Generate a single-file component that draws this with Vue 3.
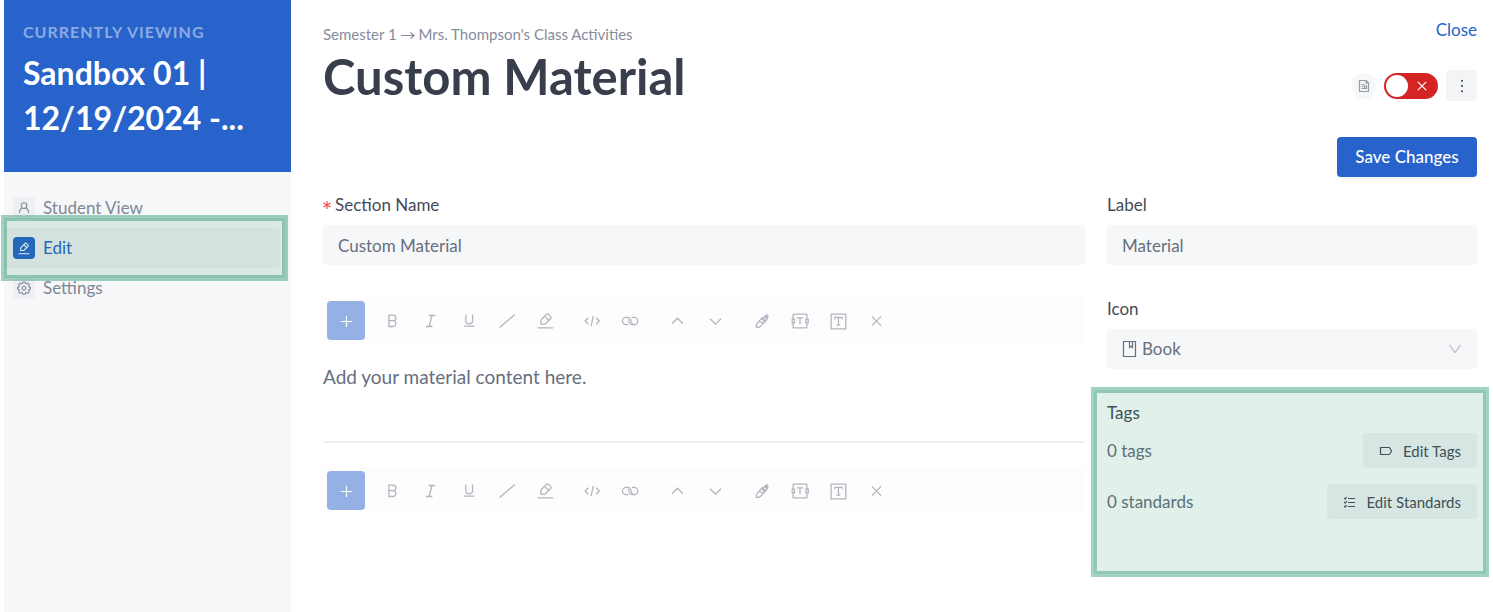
<script setup>
import { ref } from 'vue'

const sectionName = ref('Custom Material')
const label = ref('Material')
const icon = ref('Book')
const published = ref(false)

const navItems = [
  { name: 'Student View', icon: 'user', active: false },
  { name: 'Edit', icon: 'edit', active: true },
  { name: 'Settings', icon: 'gear', active: false },
]

const toolGroups = [
  [
    { name: 'Bold', paths: ['M7.500 5.500h4.500a3 3 0 0 1 0 6.200H7.500zM7.500 11.700h5.300a3.300 3.300 0 0 1 0 6.300H7.500z'] },
    { name: 'Italic', paths: ['M9.500 6h7M6.500 18h7M13 6l-3 12'] },
    { name: 'Underline', paths: ['M8.500 5v6.500a3.700 3.700 0 0 0 7.400 0V5M6.500 17.500h11.500'] },
    { name: 'Text color', paths: ['M4 19L20.500 5'] },
    { name: 'Highlight', paths: ['M7.500 15.500v-4.500l6.300-6.300q1-1 2 0l2.500 2.500q1 1 0 2l-6.300 6.300zM11.700 7l4.500 4.500M4 19.500h17'] },
  ],
  [
    { name: 'Code', paths: ['M8 8.500L4.500 12 8 15.500M16.500 8.500l3.500 3.500-3.500 3.500M13.500 6.500l-2.500 11'] },
    { name: 'Link', paths: ['M10 16H7.800a4 4 0 0 1 0-8h1.400a4 4 0 0 1 4 4q0 2.500 2 3.300M14 8h2.500a4 4 0 0 1 0 8h-1.700a4 4 0 0 1-4-4q0-1.500-.8-2'] },
  ],
  [
    { name: 'Move up', paths: ['M6.500 15l6-6 6 6'] },
    { name: 'Move down', paths: ['M6.500 9.500l6 6 6-6'] },
  ],
  [
    { name: 'Paint', paths: ['M11.500 9.200l3.600 3.600-4.600 5q-1.600 1.600-4.500 1.200-.6-2.600 1-4.600zM8.500 12.500l4.500 1.500M12.500 8.500l3.500 3.500 1.500-2.200-2.500-2.500zM15 5.500l3.500 3.500M18 4.500l-1.500 2.200M19.500 7h-2'] },
    { name: 'Text field', paths: ['M4.500 10V5q0-.5.5-.5h14q.5 0 .5.500v5M4.500 14v5q0 .5.5.5h14q.5 0 .5-.5v-5M3.500 10h2.500v4H3.500zM18.500 10H21v4h-2.500zM8.500 8.500h7M12 8.500v7'] },
    { name: 'Text box', paths: ['M4.500 4.500h16v16h-16zM8.500 10V8h8v2M12.500 8v8.500M10.500 16.500h4'] },
    { name: 'Clear', paths: ['M7.500 7l10 10M17.500 7l-10 10'] },
  ],
]
</script>

<template>
  <div class="page">
    <aside class="sidebar">
      <header class="course">
        <p class="eyebrow">CURRENTLY VIEWING</p>
        <h2>Sandbox 01 |<br />12/19/2024 -...</h2>
      </header>
      <nav>
        <a v-for="item in navItems" :key="item.name" href="#" class="nav-item" :class="{ active: item.active }">
          <span class="nav-icon">
            <svg v-if="item.icon === 'user'" viewBox="0 0 16 16"><circle cx="8" cy="5.300" r="3.200" /><path d="M3 14v-1.200a4.300 4.300 0 0 1 3.200-4.500M13 14v-1.200a4.300 4.300 0 0 0-3.200-4.500" /></svg>
            <svg v-else-if="item.icon === 'edit'" viewBox="0 0 16 16"><path d="M4.200 10.800V7.900l4.900-5.100q.8-.8 1.600 0l1.800 1.800q.8.8 0 1.600l-4.700 4.600zM7.800 4.200l3.300 3.400M2 14.500h12" /></svg>
            <svg v-else viewBox="0 0 16 16"><path d="M6.700 1.200h2.600l.4 1.600 1.200.5 1.500-.9 1.800 1.800-.9 1.500.5 1.200 1.500.4v1.900l-1.500.4-.5 1.200.9 1.500-1.800 1.800-1.500-.9-1.200.5-.4 1.500H6.700l-.4-1.500-1.200-.5-1.500.9-1.800-1.800.9-1.500-.5-1.200-1.500-.4V7.300l1.500-.4.5-1.200-.9-1.500 1.800-1.800 1.500.9 1.200-.5z" /><circle cx="8" cy="8.200" r="2.200" /></svg>
          </span>
          {{ item.name }}
        </a>
        <div class="highlight nav-highlight"></div>
      </nav>
    </aside>

    <main>
      <header class="top">
        <div>
          <p class="crumbs">Semester 1 <svg viewBox="0 0 14 10"><path d="M0 5.500h13M9.500 2.500l3.500 3-3.500 3" /></svg> Mrs. Thompson's Class Activities</p>
          <h1>Custom Material</h1>
        </div>
        <div class="actions">
          <a href="#" class="close">Close</a>
          <div class="controls">
            <button class="doc" type="button" aria-label="Document">
              <svg viewBox="0 0 12 12"><path d="M1.500 .5h6.500l2.500 2.500v8.500h-9zM8 .5V3h2.500M3.500 4.500h3M3.500 6.500h2M3.500 8.500h5M6.500 6h2v2.500h-2z" /></svg>
            </button>
            <label class="switch">
              <input v-model="published" type="checkbox" role="switch" aria-label="Published" />
              <svg viewBox="0 0 10 10"><path d="M.8.8l8.400 8.400M9.200.8L.8 9.200" /></svg>
            </label>
            <button class="more" type="button" aria-label="More">
              <svg viewBox="0 0 16 16"><circle cx="8" cy="2.700" r="1" /><circle cx="8" cy="8" r="1" /><circle cx="8" cy="13.300" r="1" /></svg>
            </button>
          </div>
          <button class="save" type="button">Save Changes</button>
        </div>
      </header>

      <div class="columns">
        <section class="editor">
          <div class="field">
            <label for="section"><svg class="required" viewBox="0 0 8 8"><path d="M4 0v8M.500 2l7 4M7.500 2l-7 4" /></svg>Section Name</label>
            <input id="section" v-model="sectionName" type="text" />
          </div>
          <template v-for="n in 2" :key="n">
            <div class="toolbar" role="toolbar">
              <button class="add" type="button" aria-label="Add"><svg viewBox="0 0 24 24"><path d="M12.500 7v11M7 12.500h11" /></svg></button>
              <div v-for="(group, g) in toolGroups" :key="g" class="group">
                <button v-for="tool in group" :key="tool.name" type="button" :aria-label="tool.name">
                  <svg viewBox="0 0 24 24"><path v-for="d in tool.paths" :key="d" :d="d" /></svg>
                </button>
              </div>
            </div>
            <div v-if="n === 1" class="content"><p>Add your material content here.</p></div>
          </template>
        </section>

        <section class="details">
          <div class="field">
            <label for="label">Label</label>
            <input id="label" v-model="label" type="text" />
          </div>
          <div class="field">
            <label for="icon">Icon</label>
            <div class="select">
              <svg class="book" viewBox="0 0 16 18"><path d="M1.500 1.500h12v15h-12zM7.500 1.500v6l1.500-1.300 1.500 1.300v-6" /></svg>
              <select id="icon" v-model="icon"><option>Book</option></select>
              <svg class="chevron" viewBox="0 0 14 10"><path d="M1.500 1L7 8.500 12.500 1" /></svg>
            </div>
          </div>
          <div class="tags">
            <h3>Tags</h3>
            <div class="tag-row">
              <span>0 tags</span>
              <button type="button"><svg viewBox="0 0 14 14"><path d="M1.500 3.500h8.300q.6 0 1 .5l1.700 3-1.700 3q-.4.500-1 .5H1.500z" /></svg>Edit Tags</button>
            </div>
            <div class="tag-row">
              <span>0 standards</span>
              <button type="button"><svg viewBox="0 0 14 14"><path d="M5 3.500h7M5 7.500h7M5 11.500h7M1.200 3l1 1 1.600-2M1.200 7l1 1 1.600-2M1.200 11l1 1 1.600-2" /></svg>Edit Standards</button>
            </div>
            <div class="highlight tags-highlight"></div>
          </div>
        </section>
      </div>
    </main>
  </div>
</template>

<style>
body {
  margin: 0;
  background: #fff;
}
</style>

<style scoped>
* {
  box-sizing: border-box;
}
.page {
  display: flex;
  min-height: 100vh;
  padding-left: 4px;
  font-family: Lato, "Open Sans", sans-serif;
  font-size: 17px;
  line-height: 24px;
  color: #666e80;
}
h1, h2, h3, p {
  margin: 0;
}
button, input, select {
  font: inherit;
  color: inherit;
  border: 0;
  margin: 0;
}
button {
  display: flex;
  align-items: center;
  justify-content: center;
  padding: 0;
  border-radius: 4px;
  background: none;
}
a {
  text-decoration: none;
}
svg {
  flex: none;
  fill: none;
  stroke: currentColor;
  stroke-width: 1.2;
}
.sidebar {
  flex: none;
  width: 287px;
  background: #f6f7f9;
}
.course {
  height: 172px;
  padding: 20px 19px;
  background: #2763ca;
  color: #fff;
}
.eyebrow {
  font-size: 16px;
  font-weight: 700;
  letter-spacing: 1px;
  color: #8cabe3;
}
h2 {
  padding-top: 6px;
  font-size: 32px;
  font-weight: 700;
  line-height: 45px;
}
nav {
  position: relative;
  padding: 16px 11px 0 0;
}
.nav-item {
  display: flex;
  align-items: center;
  gap: 8px;
  height: 40px;
  padding-left: 9px;
  border-radius: 0 4px 4px 0;
  color: #7f8797;
}
.nav-icon {
  display: flex;
  align-items: center;
  justify-content: center;
  width: 22px;
  height: 22px;
  border-radius: 4px;
  background: #eeeff2;
}
.nav-icon svg {
  width: 14px;
  height: 14px;
}
.nav-item.active {
  background: #eeeff2;
  color: #2763ca;
}
.active .nav-icon {
  background: #2763ca;
  color: #fff;
}
.highlight {
  position: absolute;
  pointer-events: none;
  border: 3px solid rgba(16, 138, 100, 0.385);
  outline: 3px solid rgba(16, 138, 100, 0.385);
  outline-offset: -6px;
  background: rgba(15, 130, 80, 0.12);
  background-clip: padding-box;
}
.nav-highlight {
  top: 43px;
  left: -3px;
  right: 3px;
  height: 66px;
}
main {
  flex: 1;
  min-width: 0;
  padding: 16px 16px 0 32px;
}
.top {
  display: flex;
  justify-content: space-between;
}
.crumbs {
  padding-top: 6px;
  font-size: 15px;
  color: #858c9b;
}
.crumbs svg {
  width: 14px;
  height: 10px;
}
h1 {
  font-size: 49px;
  font-weight: 700;
  line-height: 60px;
  color: #383e4b;
}
.actions {
  display: flex;
  flex-direction: column;
  align-items: flex-end;
}
.close {
  padding-top: 2px;
  color: #2763ca;
}
.controls {
  display: flex;
  align-items: center;
  gap: 8px;
  padding: 28px 0 36px;
}
.doc {
  width: 24px;
  height: 26px;
  border-radius: 13px;
  background: #f6f7f9;
  color: #949aa6;
}
.doc svg {
  width: 12px;
  height: 12px;
}
.switch {
  display: grid;
  align-items: center;
}
.switch input {
  grid-area: 1 / 1;
  appearance: none;
  width: 54px;
  height: 26px;
  padding: 2px;
  border-radius: 13px;
  background: #d52424;
}
.switch input::before {
  content: "";
  display: block;
  width: 22px;
  height: 22px;
  border-radius: 50%;
  background: #fff;
}
.switch svg {
  grid-area: 1 / 1;
  justify-self: end;
  width: 10px;
  height: 10px;
  margin-right: 11px;
  color: #fff;
}
.more {
  width: 31px;
  height: 31px;
  background: #f3f4f6;
  color: #383e4b;
}
.more svg {
  width: 16px;
  height: 16px;
  fill: currentColor;
  stroke: none;
}
.save {
  height: 40px;
  min-width: 140px;
  padding: 0 16px;
  background: #2763ca;
  color: #fff;
  font-weight: 500;
  box-shadow: 0 2px 0 #f5f5f5;
}
.columns {
  display: grid;
  grid-template-columns: minmax(0, 1fr) 370px;
  gap: 22px;
  padding-top: 16px;
}
.field {
  padding-bottom: 32px;
}
.field label {
  display: flex;
  align-items: center;
  padding-bottom: 8px;
  color: #444a57;
}
.required {
  width: 8px;
  height: 8px;
  margin-right: 4px;
  color: #ff4d4f;
}
.field input, .select {
  display: flex;
  align-items: center;
  width: 100%;
  height: 40px;
  padding: 0 15px;
  border-radius: 4px;
  background: #f6f7f9;
}
.select select {
  flex: 1;
  appearance: none;
  padding: 0 4px;
  background: none;
}
.book {
  width: 16px;
  height: 18px;
}
.chevron {
  width: 14px;
  height: 10px;
  color: #b4b7be;
}
.toolbar {
  display: flex;
  gap: 9px;
  padding: 4px;
  height: 47px;
  border-radius: 4px;
  background: #fdfdfd;
  color: #b1b5bf;
}
.group {
  display: flex;
}
.toolbar button {
  width: 38px;
  height: 39px;
}
.toolbar svg {
  width: 24px;
  height: 24px;
}
.toolbar .group svg {
  width: 22px;
  height: 22px;
  stroke-width: 1.4;
}
.toolbar .add {
  background: #93b1e4;
  color: #fff;
}
.content {
  min-height: 99px;
  margin-bottom: 24px;
  padding-top: 21px;
  border-bottom: 2px solid #eeeff1;
  font-size: 19px;
}
.tags {
  position: relative;
  display: flex;
  flex-direction: column;
  gap: 16px;
}
h3 {
  height: 16px;
  font-size: 17px;
  font-weight: 400;
  color: #444a57;
}
.tag-row {
  display: flex;
  align-items: center;
  justify-content: space-between;
}
.tag-row button {
  gap: 10px;
  height: 35px;
  padding: 0 16px;
  background: #f3f4f6;
  color: #444a57;
  font-size: 15px;
}
.tag-row svg {
  width: 14px;
  height: 14px;
}
.tags-highlight {
  top: -14px;
  left: -16px;
  right: -12px;
  height: 190px;
}
</style>
